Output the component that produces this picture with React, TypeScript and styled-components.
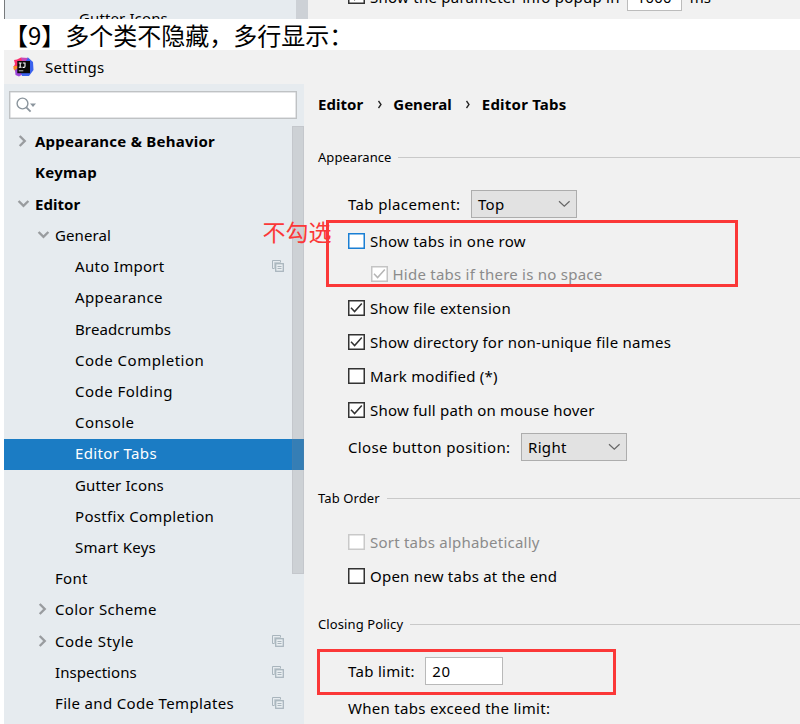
import React from 'react';
import styled, { createGlobalStyle, css } from 'styled-components';

const Global = createGlobalStyle`
  * { box-sizing: border-box; }
  body { margin: 0; background: #fff; }
`;

const Page = styled.div`
  position: relative;
  width: 800px;
  height: 724px;
  overflow: hidden;
  display: flex;
  flex-direction: column;
  font-family: 'Noto Sans', 'Noto Sans CJK SC', sans-serif;
  font-size: 15px;
  line-height: 20px;
  color: #000;
  white-space: nowrap;
`;

const Txt = styled.span<{ $ls?: number }>`
  letter-spacing: ${(p) => p.$ls ?? 0.3}px;
`;

/* Cut-off window above the heading */
const Strip = styled.div`
  display: flex;
  flex: none;
  height: 19px;
  margin-left: 4px;
  overflow: hidden;
  background: #f1f1f1;
`;
const StripSide = styled.div`
  width: 304px;
  padding: 8px 0 0 74px;
  background: #e6ebef;
  border-left: 1px solid #777a7c;
  border-right: 12px solid #cdd1d6;
`;
const StripMain = styled.div`
  display: flex;
  align-items: flex-start;
  padding-left: 40px;
`;
const StripText = styled(Txt)`
  margin-top: -13px;
`;
const StripField = styled.div`
  width: 55px;
  height: 27px;
  margin: -16px 8px 0 7px;
  padding: 2px 0 0 9px;
  background: #fff;
  border: 1px solid #bcbcbc;
`;

const Heading = styled.h1`
  flex: none;
  height: 31px;
  margin: 0;
  padding-left: 4px;
  font: 400 24px/31px 'Noto Sans CJK SC', sans-serif;
`;

const TitleBar = styled.header`
  display: flex;
  flex: none;
  align-items: center;
  gap: 11px;
  height: 34px;
  margin-left: 4px;
  padding-left: 9px;
  background: #f1f1f1;
`;

const Body = styled.div`
  display: flex;
  flex: 1;
  min-height: 0;
  margin-left: 4px;
`;

const Sidebar = styled.aside`
  position: relative;
  width: 300px;
  background: #e6ebef;
`;
const Search = styled.div`
  display: flex;
  align-items: center;
  width: 288px;
  height: 28px;
  margin: 7px 0 7.6px 5px;
  padding-left: 6px;
  background: #fff;
  border: 1px solid #bfc2c4;
  box-shadow: inset 0 0 0 0.5px #c9cccf;
`;
const Tree = styled.nav`
  display: flex;
  flex-direction: column;
`;
const Node = styled.div<{ $depth: number; $bold?: boolean; $on?: boolean }>`
  display: flex;
  align-items: center;
  flex: none;
  height: 31.22px;
  padding: 0 20px 2px ${(p) => 11 + p.$depth * 20}px;
  font-weight: ${(p) => (p.$bold ? 700 : 400)};
  ${(p) => p.$on && css`background: #1b7cc4; color: #fff;`}
`;
const Arrow = styled.span`
  display: flex;
  width: 20px;
  padding-left: 1.5px;
`;
const Copy = styled.svg`
  margin-left: auto;
`;
const Thumb = styled.div`
  position: absolute;
  top: 42px;
  right: 0;
  width: 12px;
  height: 448px;
  background: rgba(130, 130, 136, 0.25);
  border: 1px solid rgba(130, 130, 136, 0.12);
`;

const Panel = styled.main`
  display: flex;
  flex-direction: column;
  flex: 1;
  padding-left: 14px;
  background: #f1f1f1;
`;
const Crumbs = styled.div`
  display: flex;
  align-items: center;
  flex: none;
  height: 39px;
  font-weight: 700;
`;
const CrumbSep = styled.svg`
  margin: 1px 10.5px 0 13.5px;
`;
const Section = styled.div<{ $mt: number }>`
  display: flex;
  align-items: center;
  flex: none;
  gap: 7px;
  height: 50px;
  margin-top: ${(p) => p.$mt}px;
  font-size: 13px;
  &::after {
    content: '';
    flex: 1;
    height: 1px;
    background: #c9c9c9;
  }
`;
const Row = styled.div<{ $h?: number; $mt?: number; $indent?: boolean; $off?: boolean }>`
  display: flex;
  align-items: center;
  flex: none;
  height: ${(p) => p.$h ?? 34}px;
  margin-top: ${(p) => p.$mt ?? 0}px;
  padding-left: ${(p) => (p.$indent ? 52.5 : 30)}px;
  color: ${(p) => (p.$off ? '#8b8b8b' : '#000')};
`;
const Box = styled.span<{ $c: string }>`
  display: flex;
  flex: none;
  width: 17px;
  height: 16px;
  margin-right: 5px;
  background: #fff;
  border: 1px solid ${(p) => p.$c};
  box-shadow: inset 0 0 0 0.5px ${(p) => p.$c};
`;
const StripBox = styled(Box)`
  margin-top: -12px;
`;
const Select = styled.div`
  display: flex;
  align-items: center;
  justify-content: space-between;
  width: 106px;
  height: 28px;
  margin-left: 10.6px;
  padding: 0 5px 0 6px;
  background: #e2e2e2;
  border: 1px solid #adadad;
`;
const Field = styled.div`
  display: flex;
  align-items: center;
  width: 78px;
  height: 28px;
  margin-left: 10.6px;
  padding-left: 6px;
  background: #fff;
  border: 1px solid #b9b9b9;
`;

/* Annotations drawn over the window */
const Mark = styled.div<{ $x: number; $y: number; $w: number; $h: number }>`
  position: absolute;
  left: ${(p) => p.$x}px;
  top: ${(p) => p.$y}px;
  width: ${(p) => p.$w}px;
  height: ${(p) => p.$h}px;
  border: 3px solid #fb3838;
`;
const Note = styled.div`
  position: absolute;
  left: 262.5px;
  top: 215px;
  font: 400 23px/33px 'Noto Sans CJK SC', sans-serif;
  color: #fb3838;
`;

const Logo = () => (
  <svg width="21" height="20" viewBox="0 0 21 20">
    <path d="M1 3 4 2.5 8 0.5 12 4 8 13 0.5 10 2 7Z" fill="#fb2d6b" />
    <path d="M0.5 9 5 9 6 13 3 15 0.5 12Z" fill="#f98a25" />
    <path d="M2 13 5 11 10 17 6 19.5 2.5 18Z" fill="#9c45d8" />
    <path d="M11 2 15 0.5 20 5 20.5 13 16 19 9 19 8 16Z" fill="#3b62ee" />
    <path d="M8 0.5 15 1 12 5 9 4Z" fill="#c54ab8" />
    <rect x="4.3" y="4" width="12.7" height="12.2" fill="#080808" />
    <path d="M5.8 6H8.6M7.2 6V10.3M5.8 10.3H8.6M9.8 6H12V9.2Q12 10.4 10.9 10.4H9.6" fill="none" stroke="#fff" strokeWidth="1.1" />
    <path d="M5.8 13.8H10.3" stroke="#bbb" strokeWidth="1" />
  </svg>
);

const Chevron = ({ open }: { open?: boolean }) =>
  open ? (
    <svg width="13" height="12" viewBox="0 0 13 12">
      <path d="M1.6 3 6.5 7.9 11.4 3" fill="none" stroke="#999c9f" strokeWidth="2.4" />
    </svg>
  ) : (
    <svg width="13" height="12" viewBox="0 0 13 12">
      <path d="M2.7 1 7.7 6 2.7 11" fill="none" stroke="#999c9f" strokeWidth="2.4" />
    </svg>
  );

const CopyIcon = () => (
  <Copy width="12" height="12" viewBox="0 0 12 12">
    <path d="M2.5 8.5H0.5V0.5H8.5V2.5" fill="none" stroke="#a9b5bd" />
    <path d="M2.5 9V2.5H9" fill="none" stroke="#c3ccd2" />
    <rect x="3.7" y="3.7" width="7.6" height="7.6" fill="#e9eef1" stroke="#a9b5bd" strokeWidth="1.3" />
    <path d="M5.5 6.5H9.5M5.5 8.5H9.5" stroke="#a9b5bd" />
  </Copy>
);

const Tick = ({ color }: { color: string }) => (
  <svg width="15" height="14" viewBox="0 0 15 14">
    <path d="M2 6.8 5.6 10.6 12.8 2.6" fill="none" stroke={color} strokeWidth="1.5" />
  </svg>
);

const Check = ({ label, ls, checked, color = '#333', ...row }: {
  label: string; ls: number; checked?: boolean; color?: string;
  $h?: number; $mt?: number; $indent?: boolean; $off?: boolean;
}) => (
  <Row {...row}>
    <Box $c={color}>{checked && <Tick color={row.$off ? '#b5b5b5' : '#333'} />}</Box>
    <Txt $ls={ls}>{label}</Txt>
  </Row>
);

const Down = () => (
  <svg width="13" height="8" viewBox="0 0 13 8">
    <path d="M1 1.2 6.3 6.2 11.6 1.2" fill="none" stroke="#666" strokeWidth="1.2" />
  </svg>
);

type Item = { t: string; d: number; ls: number; bold?: boolean; arrow?: 'open' | 'shut'; on?: boolean; copy?: boolean };
const items: Item[] = [
  { t: 'Appearance & Behavior', d: 0, ls: 0.24, bold: true, arrow: 'shut' },
  { t: 'Keymap', d: 0, ls: 0.3, bold: true },
  { t: 'Editor', d: 0, ls: 0.05, bold: true, arrow: 'open' },
  { t: 'General', d: 1, ls: 0.1, arrow: 'open' },
  { t: 'Auto Import', d: 2, ls: 0.3, copy: true },
  { t: 'Appearance', d: 2, ls: 0.37 },
  { t: 'Breadcrumbs', d: 2, ls: 0.12 },
  { t: 'Code Completion', d: 2, ls: 0.49 },
  { t: 'Code Folding', d: 2, ls: 0.46 },
  { t: 'Console', d: 2, ls: 0.42 },
  { t: 'Editor Tabs', d: 2, ls: 0.36, on: true },
  { t: 'Gutter Icons', d: 2, ls: 0.12 },
  { t: 'Postfix Completion', d: 2, ls: 0.32 },
  { t: 'Smart Keys', d: 2, ls: 0.25 },
  { t: 'Font', d: 1, ls: 0.29 },
  { t: 'Color Scheme', d: 1, ls: 0.38 },
  { t: 'Code Style', d: 1, ls: 0.53, arrow: 'shut', copy: true },
  { t: 'Inspections', d: 1, ls: 0.04, copy: true },
  { t: 'File and Code Templates', d: 1, ls: 0.34, copy: true },
];
items[15].arrow = 'shut';

const Sep = () => (
  <CrumbSep width="6" height="9" viewBox="0 0 6 9">
    <path d="M1.5 1 4 4.5 1.5 8" fill="none" stroke="#222" strokeWidth="1.3" />
  </CrumbSep>
);

export default function App() {
  return (
    <Page>
      <Global />
      <Strip>
        <StripSide><Txt $ls={0.12}>Gutter Icons</Txt></StripSide>
        <StripMain>
          <StripBox $c="#333"><Tick color="#333" /></StripBox>
          <StripText $ls={0.25}>Show the parameter info popup in</StripText>
          <StripField><Txt $ls={0.2}>1000</Txt></StripField>
          <StripText $ls={0}>ms</StripText>
        </StripMain>
      </Strip>
      <Heading>【9】多个类不隐藏，多行显示：</Heading>
      <TitleBar>
        <Logo />
        <Txt $ls={0.3}>Settings</Txt>
      </TitleBar>
      <Body>
        <Sidebar>
          <Search>
            <svg width="22" height="18" viewBox="0 0 22 18">
              <circle cx="6.5" cy="7.5" r="5.4" fill="none" stroke="#8b959d" strokeWidth="1.4" />
              <path d="M10.3 11.3 14.6 15.6" stroke="#8b959d" strokeWidth="1.8" />
              <path d="M14 7.5H20L17 10.9Z" fill="#8b959d" />
            </svg>
          </Search>
          <Tree>
            {items.map((n) => (
              <Node key={n.t + n.d} $depth={n.d} $bold={n.bold} $on={n.on}>
                <Arrow>{n.arrow && <Chevron open={n.arrow === 'open'} />}</Arrow>
                <Txt $ls={n.ls}>{n.t}</Txt>
                {n.copy && <CopyIcon />}
              </Node>
            ))}
          </Tree>
          <Thumb />
        </Sidebar>
        <Panel>
          <Crumbs>
            <Txt $ls={0.05}>Editor</Txt><Sep />
            <Txt $ls={0.02}>General</Txt><Sep />
            <Txt $ls={0.22}>Editor Tabs</Txt>
          </Crumbs>
          <Section $mt={9}><Txt $ls={0.05}>Appearance</Txt></Section>
          <Row $h={28} $mt={8}>
            <Txt $ls={0.38}>Tab placement:</Txt>
            <Select><Txt>Top</Txt><Down /></Select>
          </Row>
          <Check label="Show tabs in one row" ls={0.28} color="#1a7fd4" $h={33} $mt={6} />
          <Check label="Hide tabs if there is no space" ls={0.24} color="#c4c4c4" checked $h={33} $indent $off />
          <Check label="Show file extension" ls={0.27} checked $mt={1} />
          <Check label="Show directory for non-unique file names" ls={0.24} checked />
          <Check label="Mark modified (*)" ls={0.2} />
          <Check label="Show full path on mouse hover" ls={0.2} checked $h={33} />
          <Row $h={28} $mt={7}>
            <Txt $ls={0.36}>Close button position:</Txt>
            <Select><Txt>Right</Txt><Down /></Select>
          </Row>
          <Section $mt={12}><Txt $ls={0.1}>Tab Order</Txt></Section>
          <Check label="Sort tabs alphabetically" ls={0.23} color="#c9c9c9" $mt={2} $off />
          <Check label="Open new tabs at the end" ls={0.24} />
          <Section $mt={6}><Txt $ls={0.1}>Closing Policy</Txt></Section>
          <Row $h={28} $mt={8}>
            <Txt $ls={0.3}>Tab limit:</Txt>
            <Field><Txt $ls={0.5}>20</Txt></Field>
          </Row>
          <Row $h={32} $mt={7}><Txt $ls={0.3}>When tabs exceed the limit:</Txt></Row>
        </Panel>
      </Body>
      <Mark $x={326} $y={220} $w={412} $h={67} />
      <Mark $x={317} $y={649} $w={299} $h={46} />
      <Note>不勾选</Note>
    </Page>
  );
}
